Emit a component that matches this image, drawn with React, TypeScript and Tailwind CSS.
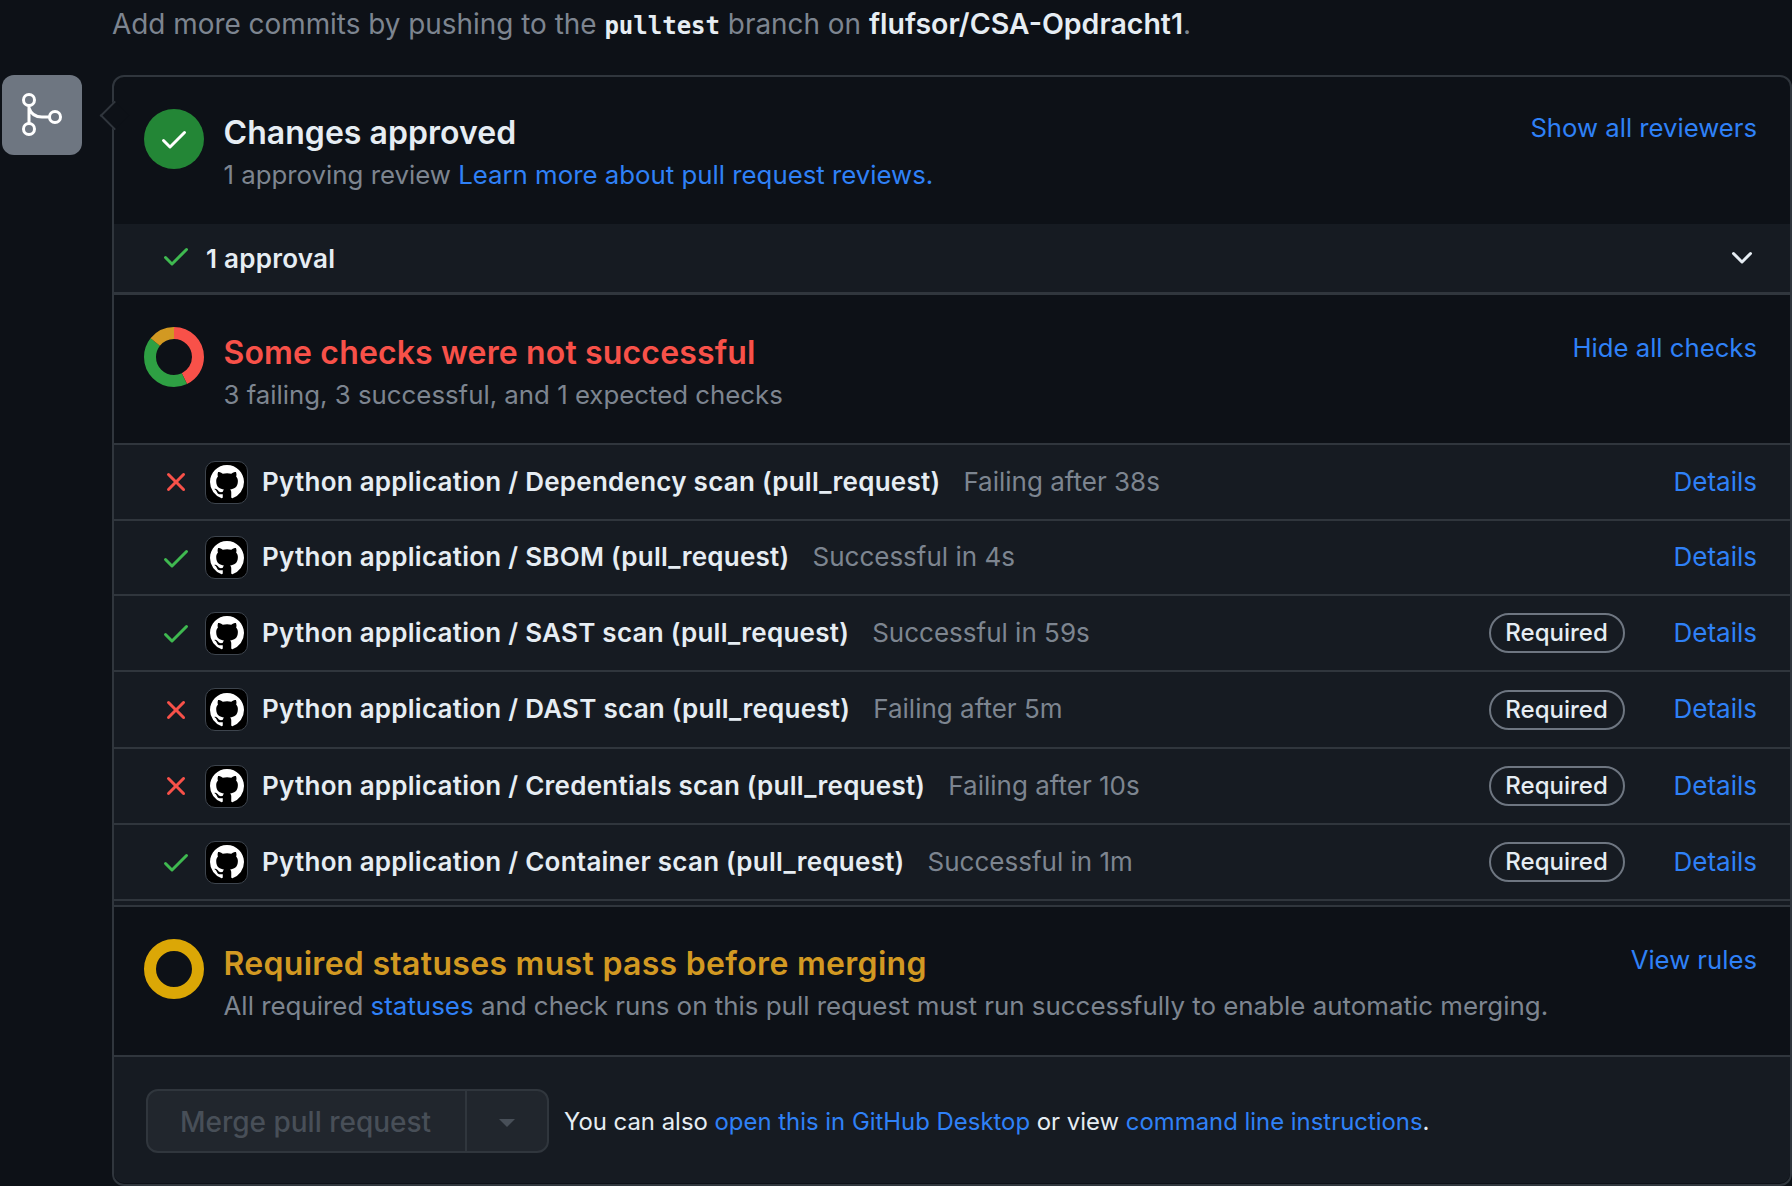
import React from 'react';

const CHECK = 'M13.78 4.22a.75.75 0 0 1 0 1.06l-7.25 7.25a.75.75 0 0 1-1.06 0L2.22 9.28a.751.751 0 0 1 .018-1.042.751.751 0 0 1 1.042-.018L6 10.94l6.72-6.72a.75.75 0 0 1 1.06 0Z';
const CROSS = 'M3.72 3.72a.75.75 0 0 1 1.06 0L8 6.94l3.22-3.22a.749.749 0 0 1 1.275.326.749.749 0 0 1-.215.734L9.06 8l3.22 3.22a.749.749 0 0 1-.326 1.275.749.749 0 0 1-.734-.215L8 9.06l-3.22 3.22a.751.751 0 0 1-1.042-.018.751.751 0 0 1-.018-1.042L6.94 8 3.72 4.78a.75.75 0 0 1 0-1.06Z';
const CHEVRON = 'M12.78 5.22a.749.749 0 0 1 0 1.06l-4.25 4.25a.749.749 0 0 1-1.06 0L3.22 6.28a.749.749 0 1 1 1.06-1.06L8 8.939l3.72-3.719a.749.749 0 0 1 1.06 0Z';
const MARK = 'M8 0c4.42 0 8 3.58 8 8a8.013 8.013 0 0 1-5.45 7.59c-.4.08-.55-.17-.55-.38 0-.27.01-1.13.01-2.2 0-.75-.25-1.23-.54-1.48 1.78-.2 3.65-.88 3.65-3.95 0-.88-.31-1.59-.82-2.15.08-.2.36-1.02-.08-2.12 0 0-.67-.22-2.2.82-.64-.18-1.32-.27-2-.27-.68 0-1.36.09-2 .27-1.53-1.03-2.2-.82-2.2-.82-.44 1.1-.16 1.92-.08 2.12-.51.56-.82 1.28-.82 2.15 0 3.06 1.86 3.75 3.64 3.95-.23.2-.44.55-.51 1.07-.46.21-1.61.55-2.33-.66-.15-.24-.6-.83-1.23-.82-.67.01-.27.38.01.53.34.19.73.9.82 1.13.16.45.68 1.31 2.69.94 0 .67.01 1.3.01 1.49 0 .21-.15.45-.55.38A7.995 7.995 0 0 1 0 8c0-4.42 3.58-8 8-8Z';

const Octicon = ({ d, className }: { d: string; className: string }) => (
    <svg viewBox="0 0 16 16" fill="currentColor" className={className}>
        <path d={d} />
    </svg>
);

// thinner than the octicon, the reference draws it with a light stroke
const MergeIcon = () => (
    <svg viewBox="0 0 80 80" fill="none" stroke="white" strokeWidth="3" className="w-[80px] h-[80px]">
        <circle cx="27" cy="25" r="5.5" />
        <circle cx="27" cy="54" r="5.5" />
        <circle cx="53" cy="42" r="5.5" />
        <path d="M27 30.5V48.5M27 33C29 39 34 42 40 42H47.5" />
    </svg>
);

const Donut = () => (
    <svg viewBox="0 0 60 60" className="w-[60px] h-[60px] shrink-0 -rotate-90">
        <circle cx="30" cy="30" r="24" fill="none" stroke="#f85149" strokeWidth="12" pathLength={7} strokeDasharray="3 4" />
        <circle cx="30" cy="30" r="24" fill="none" stroke="#2ea043" strokeWidth="12" pathLength={7} strokeDasharray="3 4" strokeDashoffset={-3} />
        <circle cx="30" cy="30" r="24" fill="none" stroke="#d29922" strokeWidth="12" pathLength={7} strokeDasharray="1 6" strokeDashoffset={-6} />
    </svg>
);

type Check = { name: string; ok: boolean; status: string; required?: boolean; h: string };

const checks: Check[] = [
    { name: 'Python application / Dependency scan (pull_request)', ok: false, status: 'Failing after 38s', h: 'h-[76px]' },
    { name: 'Python application / SBOM (pull_request)', ok: true, status: 'Successful in 4s', h: 'h-[75px]' },
    { name: 'Python application / SAST scan (pull_request)', ok: true, status: 'Successful in 59s', required: true, h: 'h-[76px]' },
    { name: 'Python application / DAST scan (pull_request)', ok: false, status: 'Failing after 5m', required: true, h: 'h-[77px]' },
    { name: 'Python application / Credentials scan (pull_request)', ok: false, status: 'Failing after 10s', required: true, h: 'h-[76px]' },
    { name: 'Python application / Container scan (pull_request)', ok: true, status: 'Successful in 1m', required: true, h: 'h-[76px]' },
];

const CheckRow = ({ check }: { check: Check }) => (
    <div className={`${check.h} flex items-center border-t-2 border-[#30363d] bg-[#161b22] pl-[46px] pr-[33px]`}>
        <Octicon d={check.ok ? CHECK : CROSS} className={`w-8 h-8 shrink-0 ${check.ok ? 'text-[#3fb950]' : 'text-[#f85149]'}`} />
        <div className="w-[43px] h-[43px] shrink-0 ml-[13px] rounded-[10px] bg-black border border-[#3d444d] flex items-center justify-center">
            <Octicon d={MARK} className="w-[34px] h-[34px] text-white" />
        </div>
        <span className="ml-[14px] -mt-[2px] text-[26px] tracking-[0.25px] font-semibold text-[#e6edf3] whitespace-nowrap">{check.name}</span>
        <span className="ml-[23px] -mt-[2px] text-[26px] text-[#7d8590] whitespace-nowrap">{check.status}</span>
        <div className="ml-auto flex items-center">
            {check.required && (
                <span className="w-[136px] h-[40px] mr-[49px] flex items-center justify-center rounded-full border-2 border-[#6e7681] text-[24px] font-medium text-[#e6edf3]">
                    Required
                </span>
            )}
            <a className="-mt-[2px] text-[26px] text-[#2f81f7]">Details</a>
        </div>
    </div>
);

export default function App() {
    return (
        <div className="h-[1186px] w-[1792px] overflow-hidden bg-[#0d1117] font-['Inter',sans-serif]">
            <p className="pl-[112px] h-[75px] pt-[4px] text-[27.9px] leading-[40px] text-[#7d8590] whitespace-nowrap">
                Add more commits by pushing to the{' '}
                <code className="font-['DejaVu_Sans_Mono',monospace] font-bold text-[24px] text-[#e6edf3]">pulltest</code>{' '}
                branch on <span className="font-semibold text-[28.5px] text-[#e6edf3]">flufsor/CSA-Opdracht1</span>.
            </p>
            <div className="flex items-start pl-[2px]">
                <div className="w-[80px] h-[80px] shrink-0 rounded-[12px] bg-[#6e7681]">
                    <MergeIcon />
                </div>
                <div className="relative ml-[30px] w-[1680px] h-[1111px] border-2 border-[#30363d] rounded-[12px] bg-[#0d1117]">
                    <div className="absolute -left-[10px] top-[28px] w-[21px] h-[21px] rotate-45 bg-[#0d1117] border-l-2 border-b-2 border-[#30363d]" />
                    <div className="relative h-[147px] flex items-start pl-[30px] pr-[33px] pt-[32px]">
                        <div className="w-[60px] h-[60px] shrink-0 rounded-full bg-[#238636] flex items-center justify-center">
                            <Octicon d={CHECK} className="w-8 h-8 text-white" />
                        </div>
                        <div className="ml-[19.5px]">
                            <h3 className="text-[32px] leading-[42px] mt-[3px] tracking-[0.05px] font-semibold text-[#e6edf3]">Changes approved</h3>
                            <p className="text-[25.8px] leading-[42px] text-[#7d8590]">
                                1 approving review <a className="text-[#2f81f7]">Learn more about pull request reviews.</a>
                            </p>
                        </div>
                        <a className="ml-auto -mt-[1px] text-[25.7px] leading-[40px] text-[#2f81f7]">Show all reviewers</a>
                    </div>
                    <div className="h-[68px] flex items-center bg-[#161b22] pl-[46px] pr-[32px]">
                        <Octicon d={CHECK} className="w-8 h-8 shrink-0 text-[#3fb950] -mt-[4px]" />
                        <span className="ml-[14px] text-[26px] tracking-[0.25px] font-semibold text-[#e6edf3]">1 approval</span>
                        <Octicon d={CHEVRON} className="ml-auto w-8 h-8 text-[#e6edf3] -mt-[1px]" />
                    </div>
                    <div className="h-[151px] flex items-start border-t-[3px] border-[#30363d] pl-[30px] pr-[33px] pt-[32px]">
                        <Donut />
                        <div className="ml-[19.5px]">
                            <h3 className="text-[32px] leading-[42px] mt-[5px] tracking-[0.15px] font-semibold text-[#f85149]">Some checks were not successful</h3>
                            <p className="text-[25.8px] leading-[42px] text-[#7d8590]">3 failing, 3 successful, and 1 expected checks</p>
                        </div>
                        <a className="ml-auto mt-[1px] text-[25.7px] leading-[40px] text-[#2f81f7]">Hide all checks</a>
                    </div>
                    {checks.map((check) => (
                        <CheckRow key={check.name} check={check} />
                    ))}
                    <div className="h-[6px] border-t-2 border-[#30363d] bg-[#161b22]" />
                    <div className="h-[150px] flex items-start border-t-2 border-[#30363d] pl-[30px] pr-[33px] pt-[32px]">
                        <div className="w-[60px] h-[60px] shrink-0 rounded-full border-[12px] border-[#dba706]" />
                        <div className="ml-[19.5px]">
                            <h3 className="text-[32px] leading-[42px] mt-[4px] tracking-[0.3px] font-semibold text-[#d29922]">Required statuses must pass before merging</h3>
                            <p className="text-[25.9px] leading-[42px] text-[#7d8590]">
                                All required <a className="text-[#2f81f7]">statuses</a> and check runs on this pull request must run successfully to enable automatic merging.
                            </p>
                        </div>
                        <a className="ml-auto mt-[1px] text-[25.7px] leading-[40px] text-[#2f81f7]">View rules</a>
                    </div>
                    <div className="h-[128px] flex items-start border-t-2 border-[#30363d] bg-[#161b22] pl-[32px] pt-[32px] rounded-b-[10px]">
                        <div className="w-[403px] h-[64px] flex rounded-[12px] border-2 border-[#30363d] bg-[#21262d]">
                            <span className="w-[317px] pt-[2px] flex items-center justify-center pr-[2px] text-[28px] font-medium text-[#484f58]">Merge pull request</span>
                            <span className="flex-1 flex items-center justify-center border-l-2 border-[#30363d]">
                                <span className="w-0 h-0 mt-[4px] border-x-[8px] border-t-[8px] border-x-transparent border-t-[#484f58]" />
                            </span>
                        </div>
                        <p className="ml-[15px] h-[64px] pt-[1px] flex items-center text-[23.9px] text-[#e6edf3] whitespace-nowrap">
                            <span>
                                You can also <a className="text-[#2f81f7]">open this in GitHub Desktop</a> or view{' '}
                                <a className="text-[#2f81f7]">command line instructions</a>.
                            </span>
                        </p>
                    </div>
                </div>
            </div>
        </div>
    );
}
